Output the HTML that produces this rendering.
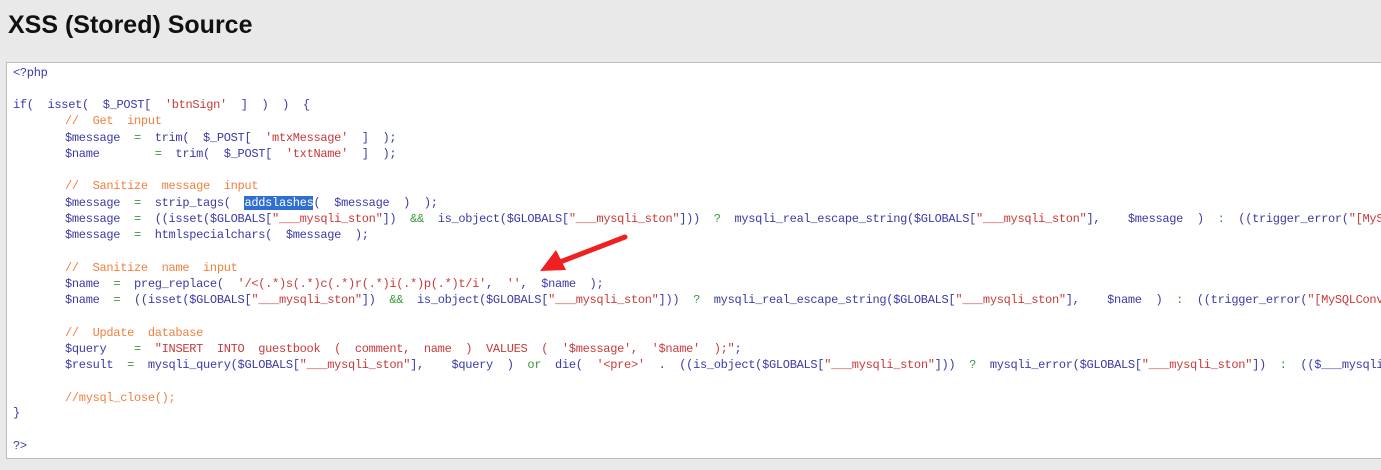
<!DOCTYPE html>
<html><head><meta charset="utf-8"><style>
html,body{margin:0;width:1381px;height:470px;overflow:hidden}
body{background:#e9e9e9;position:relative;font-family:"Liberation Sans",sans-serif}
h1{position:absolute;left:8px;top:11px;margin:0;font-size:25px;font-weight:bold;color:#111}
.box{position:absolute;left:6px;top:62px;width:1375px;height:395px;background:#fff;border:1px solid #bbb;border-right:none;overflow:hidden}
.l{position:absolute;left:6px;white-space:pre;font-family:"Liberation Mono",monospace;font-size:12px;letter-spacing:-0.3px;color:#3a3aa8;line-height:14px}
.c{color:#f08040}.s{color:#c83a3a}.k{color:#3a9a3a}
.hl{background:#2f6fd0;color:#fff}
</style></head><body>
<h1>XSS (Stored) Source</h1>
<div class="box">
<div class="l" style="top:3px">&lt;?php</div>
<div class="l" style="top:35px">if(  isset(  $_POST[  <span class="s">'btnSign'</span>  ]  )  )  {</div>
<div class="l c" style="top:51px;left:58px">//  Get  input</div>
<div class="l" style="top:68px;left:58px">$message  <span class="k">=</span>  trim(  $_POST[  <span class="s">'mtxMessage'</span>  ]  );</div>
<div class="l" style="top:84px;left:58px">$name        <span class="k">=</span>  trim(  $_POST[  <span class="s">'txtName'</span>  ]  );</div>
<div class="l c" style="top:116px;left:58px">//  Sanitize  message  input</div>
<div class="l" style="top:133px;left:58px">$message  <span class="k">=</span>  strip_tags(  <span class="hl">addslashes</span>(  $message  )  );</div>
<div class="l" style="top:149px;left:58px">$message  <span class="k">=</span>  ((isset($GLOBALS[<span class="s">"___mysqli_ston"</span>])  <span class="k">&amp;&amp;</span>  is_object($GLOBALS[<span class="s">"___mysqli_ston"</span>]))  <span class="k">?</span>  mysqli_real_escape_string($GLOBALS[<span class="s">"___mysqli_ston"</span>],    $message  )  <span class="k">:</span>  ((trigger_error(<span class="s">"[MySQLConverterToo]</span></div>
<div class="l" style="top:165px;left:58px">$message  <span class="k">=</span>  htmlspecialchars(  $message  );</div>
<div class="l c" style="top:198px;left:58px">//  Sanitize  name  input</div>
<div class="l" style="top:214px;left:58px">$name  <span class="k">=</span>  preg_replace(  <span class="s">'/&lt;(.*)s(.*)c(.*)r(.*)i(.*)p(.*)t/i'</span>,  <span class="s">''</span>,  $name  );</div>
<div class="l" style="top:230px;left:58px">$name  <span class="k">=</span>  ((isset($GLOBALS[<span class="s">"___mysqli_ston"</span>])  <span class="k">&amp;&amp;</span>  is_object($GLOBALS[<span class="s">"___mysqli_ston"</span>]))  <span class="k">?</span>  mysqli_real_escape_string($GLOBALS[<span class="s">"___mysqli_ston"</span>],    $name  )  <span class="k">:</span>  ((trigger_error(<span class="s">"[MySQLConverterToo]</span></div>
<div class="l c" style="top:263px;left:58px">//  Update  database</div>
<div class="l" style="top:279px;left:58px">$query    <span class="k">=</span>  <span class="s">"INSERT  INTO  guestbook  (  comment,  name  )  VALUES  (  '$message',  '$name'  );"</span>;</div>
<div class="l" style="top:295px;left:58px">$result  <span class="k">=</span>  mysqli_query($GLOBALS[<span class="s">"___mysqli_ston"</span>],    $query  )  <span class="k">or</span>  die(  <span class="s">'&lt;pre&gt;'</span>  .  ((is_object($GLOBALS[<span class="s">"___mysqli_ston"</span>]))  <span class="k">?</span>  mysqli_error($GLOBALS[<span class="s">"___mysqli_ston"</span>])  <span class="k">:</span>  (($___mysqli_res</div>
<div class="l c" style="top:328px;left:58px">//mysql_close();</div>
<div class="l" style="top:343px">}</div>
<div class="l" style="top:376px">?&gt;</div>
</div>
<svg style="position:absolute;left:0;top:0" width="1381" height="470">
<line x1="625" y1="237" x2="560" y2="262" stroke="#f02020" stroke-width="5" stroke-linecap="round"/>
<polygon points="540,271 556,250 566,270" fill="#f02020"/>
</svg>
</body></html>
